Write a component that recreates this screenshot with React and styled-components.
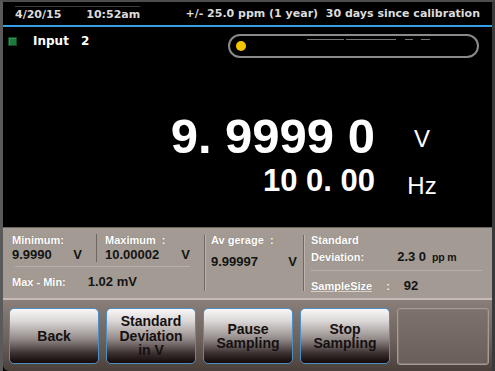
import React from 'react';
import styled, { createGlobalStyle } from 'styled-components';

const GlobalStyle = createGlobalStyle`
    html, body { margin: 0; padding: 0; background: #000; }
    * { box-sizing: border-box; }
`;

const Frame = styled.div`
    width: 495px;
    height: 371px;
    display: flex;
    flex-direction: column;
    background: #000;
    border-top: 2px solid #4d4d4d;
    border-left: 3px solid #5a5a5a;
    border-right: 3px solid #3a3a3a;
    font-family: "Liberation Sans", Arial, sans-serif;
    overflow: hidden;
`;

const Screen = styled.div`
    height: 225px;
    display: flex;
    flex-direction: column;
    background: #000;
`;

const Header = styled.div`
    height: 25px;
    display: flex;
    align-items: center;
    justify-content: space-between;
    padding: 0 12px 0 12px;
    border-bottom: 2px solid #35a0e2;
    font-family: "DejaVu Sans", Verdana, sans-serif;
    font-weight: bold;
    font-size: 11px;
    color: #dcdcdc;
`;

const DateTime = styled.div`
    display: flex;
    gap: 25px;
    padding-top: 1px;
    border-top: 1px solid #3c3c3c;
`;

const InputRow = styled.div`
    height: 36px;
    display: flex;
    align-items: center;
    padding: 0 13px 0 5px;
`;

const InputLed = styled.span`
    width: 9px;
    height: 9px;
    background: #1d7a3c;
    border: 1px solid #0d4a22;
    box-shadow: inset 1px 1px 0 #2e9a55;
    margin-top: -8px;
`;

const InputLabel = styled.span`
    margin-left: 16px;
    margin-top: -8px;
    font-family: "DejaVu Sans", Verdana, sans-serif;
    font-weight: bold;
    font-size: 12px;
    color: #fff;
    word-spacing: 8px;
`;

const StatusPill = styled.div`
    margin-left: auto;
    margin-top: 2px;
    width: 251px;
    height: 24px;
    border: 2px solid #8a8a8a;
    border-radius: 12px;
    display: flex;
    align-items: center;
    padding-left: 6px;
    position: relative;
`;

const StatusDot = styled.span`
    width: 10px;
    height: 10px;
    border-radius: 50%;
    background: #f6c400;
`;

const ClippedText = styled.span`
    position: absolute;
    top: 3px;
    left: 77px;
    width: 123px;
    height: 1px;
    background: linear-gradient(90deg, #777 0 30%, #000 30% 32%, #777 32% 72%, #000 72% 80%, #777 80% 86%, #000 86% 93%, #777 93%);
`;

const Readout = styled.div`
    display: grid;
    grid-template-columns: 1fr 94px;
    padding-right: 23px;
    margin-top: 47px;
    color: #fff;
    font-weight: bold;
`;

const Value = styled.div`
    text-align: right;
    font-size: ${p => p.$size}px;
    line-height: ${p => p.$lh}px;
    white-space: pre;
`;

const Unit = styled.div`
    text-align: center;
    font-weight: normal;
    font-size: 24px;
    line-height: ${p => p.$lh}px;
    padding-top: ${p => p.$offset}px;
`;

const StatsPanel = styled.div`
    height: 73px;
    display: flex;
    padding: 6px 8px 0 9px;
    background: #a39b93;
    border-top: 1px solid #6d665f;
    border-bottom: 2px solid #c4bcb4;
    font-weight: bold;
`;

const MinMaxGroup = styled.div`
    width: 178px;
    display: flex;
    flex-direction: column;
`;

const PairRow = styled.div`
    display: flex;
`;

const Cell = styled.div`
    width: ${p => p.$w}px;
    padding-left: ${p => p.$pl || 0}px;
    border-left: ${p => (p.$divider ? '1px solid #6f6860' : 'none')};
`;

const Label = styled.div`
    font-size: 11px;
    line-height: 13px;
    color: #fff;
    text-shadow: 0 0 1px rgba(90, 80, 70, 0.6);
    white-space: pre;
`;

const Reading = styled.div`
    display: flex;
    align-items: baseline;
    justify-content: space-between;
    font-size: 13px;
    line-height: 15px;
    color: #141414;
    margin-top: ${p => p.$mt || 0}px;
`;

const HRule = styled.div`
    height: 1px;
    background: #5f5851;
    border-bottom: 1px solid #b8b0a8;
    margin: ${p => p.$m};
`;

const InlineRow = styled.div`
    display: flex;
    align-items: baseline;
    gap: ${p => p.$gap}px;
    margin-top: 7px;
`;

const VDivider = styled.div`
    width: 1px;
    height: 56px;
    margin: 1px 6px 0 ${p => p.$ml}px;
    background: #6f6860;
    box-shadow: 1px 0 0 #bdb5ad;
`;

const AverageCell = styled.div`
    width: 92px;
`;

const StdGroup = styled.div`
    flex: 1;
    display: flex;
    flex-direction: column;
    padding-left: 1px;
`;

const StdValue = styled.span`
    font-size: 13px;
    color: #141414;
    white-space: pre;
`;

const SmallUnit = styled.span`
    font-size: 10.5px;
    color: #141414;
    margin-left: 6px;
    letter-spacing: -0.2px;
`;

const Underlined = styled(Label)`
    text-decoration: underline;
    text-decoration-color: #d8d0c8;
`;

const ButtonBar = styled.div`
    flex: 1;
    display: flex;
    gap: 7px;
    padding: 8px 3px 5px 6px;
    background: linear-gradient(#8a7f78, #6e635c 55%, #4a3f39);
    border-bottom-left-radius: 6px;
`;

const SoftButton = styled.button`
    flex: none;
    width: 90px;
    height: 56px;
    border: 1.5px solid #4b8fc6;
    border-radius: 5px;
    background: linear-gradient(#f8f6f6, #dcd8d8 22%, #948c8a 55%, #3a3030 82%, #140808);
    font-family: "Liberation Sans", Arial, sans-serif;
    font-weight: bold;
    font-size: 14px;
    line-height: 14.5px;
    color: #161010;
    padding: 0 2px;
    text-align: center;
`;

const BlankButton = styled.div`
    flex: 1;
    height: 57px;
    border: 1px solid #a59c95;
    border-radius: 3px;
    background: linear-gradient(#7d736c, #6a5f58);
    box-shadow: inset 0 0 0 1px #857b74;
`;

export default function App() {
    return (
        <>
            <GlobalStyle />
            <Frame>
                <Screen>
                    <Header>
                        <DateTime>
                            <span>4/20/15</span>
                            <span>10:52am</span>
                        </DateTime>
                        <span>+/- 25.0 ppm (1 year)&nbsp; 30 days since calibration</span>
                    </Header>
                    <InputRow>
                        <InputLed />
                        <InputLabel>Input 2</InputLabel>
                        <StatusPill>
                            <StatusDot />
                            <ClippedText />
                        </StatusPill>
                    </InputRow>
                    <Readout>
                        <Value $size={49} $lh={53}>{'9. 9999 0'}</Value>
                        <Unit $lh={30} $offset={14}>V</Unit>
                        <Value $size={31} $lh={36}>{'10 0. 00'}</Value>
                        <Unit $lh={30} $offset={8}>Hz</Unit>
                    </Readout>
                </Screen>

                <StatsPanel>
                    <MinMaxGroup>
                        <PairRow>
                            <Cell $w={84}>
                                <Label>Minimum:</Label>
                                <Reading>
                                    <span>9.9990</span>
                                    <span style={{ marginRight: 14 }}>V</span>
                                </Reading>
                            </Cell>
                            <Cell $w={94} $pl={8} $divider>
                                <Label>Maximum  :</Label>
                                <Reading>
                                    <span>10.00002</span>
                                    <span>V</span>
                                </Reading>
                            </Cell>
                        </PairRow>
                        <HRule $m="4px 0 0 3px" />
                        <InlineRow $gap={22}>
                            <Label>Max - Min:</Label>
                            <StdValue>1.02 mV</StdValue>
                        </InlineRow>
                    </MinMaxGroup>

                    <VDivider $ml={14} />

                    <AverageCell>
                        <Label>Av gerage  :</Label>
                        <Reading $mt={7}>
                            <span>9.99997</span>
                            <span style={{ marginRight: 6 }}>V</span>
                        </Reading>
                    </AverageCell>

                    <VDivider $ml={0} />

                    <StdGroup>
                        <Label>Standard</Label>
                        <InlineRow $gap={33} style={{ marginTop: 0 }}>
                            <Label>Deviation:</Label>
                            <span>
                                <StdValue>2.3 0</StdValue>
                                <SmallUnit>pp m</SmallUnit>
                            </span>
                        </InlineRow>
                        <HRule $m="5px 2px 0 0" />
                        <InlineRow $gap={14}>
                            <Underlined>SampleSize</Underlined>
                            <Label>:</Label>
                            <StdValue>92</StdValue>
                        </InlineRow>
                    </StdGroup>
                </StatsPanel>

                <ButtonBar>
                    <SoftButton>Back</SoftButton>
                    <SoftButton>Standard<br />Deviation<br />in V</SoftButton>
                    <SoftButton>Pause<br />Sampling</SoftButton>
                    <SoftButton>Stop<br />Sampling</SoftButton>
                    <BlankButton />
                </ButtonBar>
            </Frame>
        </>
    );
}
